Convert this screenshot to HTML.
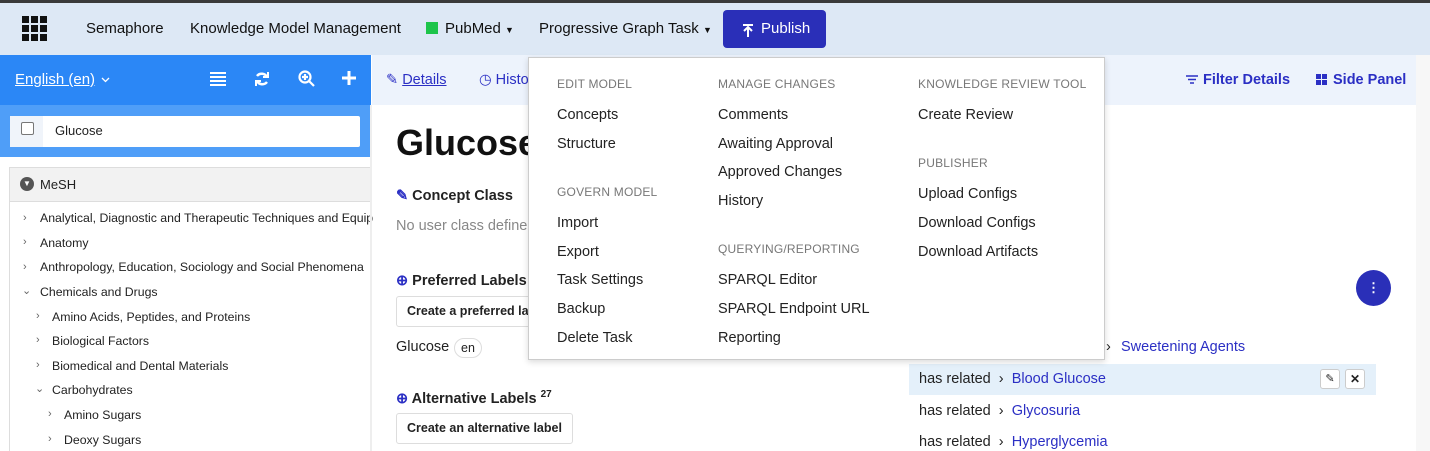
<!DOCTYPE html>
<html><head><style>
*{box-sizing:border-box;margin:0;padding:0}
body{width:1430px;height:451px;overflow:hidden;background:#fff;font-family:"Liberation Sans",Arial,sans-serif;color:#222;position:relative}
.a{position:absolute;white-space:nowrap}
.top{position:absolute;left:0;top:0;width:1430px;height:3px;background:#3a3a3a}
.nav{position:absolute;left:0;top:3px;width:1430px;height:52px;background:#dde8f5}
.nav .t{font-size:15px;color:#111;top:17px}
.lhead{position:absolute;left:0;top:55px;width:371px;height:50px;background:#2b87f6}
.lsearch{position:absolute;left:0;top:105px;width:371px;height:52px;background:#4f9ef8}
.tree{position:absolute;left:9px;top:167px;width:362px;height:284px;border-left:1px solid #ddd;border-top:1px solid #ddd;overflow:hidden}
.tree .h{height:34px;background:#f2f2f2;border-bottom:1px solid #ddd}
.ti{font-size:12.3px;color:#222;position:absolute;white-space:nowrap}
.car{font-size:11px;color:#666;position:absolute}
.tabs{position:absolute;left:372px;top:55px;width:1044px;height:50px;background:#edf3fc}
.menu{position:absolute;left:528px;top:57px;width:577px;height:303px;background:#fff;border:1px solid #ccc;box-shadow:0 2px 6px rgba(0,0,0,.15)}
.menu .s{position:absolute;font-size:12px;color:#777;letter-spacing:.2px;white-space:nowrap}
.menu .i{position:absolute;font-size:14.5px;color:#222;white-space:nowrap}
.blue{color:#2b2fc4}
.btn{position:absolute;border:1px solid #ddd;border-radius:3px;font-size:12.5px;font-weight:bold;padding:0 10px;height:31px;line-height:29px;background:#fff}
</style></head><body>
<div class="top"></div>
<div class="nav">
 <svg class="a" style="left:22px;top:13px" width="26" height="26"><g fill="#111">
 <rect x="0" y="0" width="7" height="7"/><rect x="9" y="0" width="7" height="7"/><rect x="18" y="0" width="7" height="7"/>
 <rect x="0" y="9" width="7" height="7"/><rect x="9" y="9" width="7" height="7"/><rect x="18" y="9" width="7" height="7"/>
 <rect x="0" y="18" width="7" height="7"/><rect x="9" y="18" width="7" height="7"/><rect x="18" y="18" width="7" height="7"/></g></svg>
 <div class="a t" style="left:86px">Semaphore</div>
 <div class="a t" style="left:190px">Knowledge Model Management</div>
 <div class="a" style="left:426px;top:19px;width:12px;height:12px;background:#1dc44a"></div>
 <div class="a t" style="left:445px">PubMed <span style="font-size:9px">▼</span></div>
 <div class="a t" style="left:539px">Progressive Graph Task <span style="font-size:9px">▼</span></div>
 <div class="a" style="left:723px;top:7px;width:103px;height:38px;background:#2a2fb8;border-radius:4px"></div>
 <svg class="a" style="left:742px;top:21px" width="12" height="13" fill="none" stroke="#fff" stroke-width="2"><path d="M1 1h10M6 13V4M2 7l4-4 4 4"/></svg>
 <div class="a" style="left:761px;top:17px;color:#fff;font-size:15px">Publish</div>
</div>
<div class="lhead">
 <div class="a" style="left:15px;top:16px;color:#fff;font-size:15px;text-decoration:underline">English (en)</div>
 <svg class="a" style="left:101px;top:22px" width="9" height="6" fill="none" stroke="#fff" stroke-width="1.3"><path d="M1 1l3.5 3.5L8 1"/></svg>
 <svg class="a" style="left:210px;top:17px" width="16" height="14"><g fill="#fff"><rect y="0" width="16" height="2"/><rect y="4" width="16" height="2"/><rect y="8" width="16" height="2"/><rect y="12" width="16" height="2"/></g></svg>
 <svg class="a" style="left:254px;top:16px" width="16" height="16" fill="none" stroke="#fff" stroke-width="2.5"><path d="M13 6A6 6 0 0 0 3 5M3 10a6 6 0 0 0 10 1"/><path d="M14 1v5h-5M2 15v-5h5" stroke-width="2"/></svg>
 <svg class="a" style="left:298px;top:15px" width="17" height="17" fill="none" stroke="#fff" stroke-width="2.2"><circle cx="7" cy="7" r="5.5"/><path d="M11 11l5 5M7 4v6M4 7h6"/></svg>
 <svg class="a" style="left:342px;top:16px" width="14" height="14" stroke="#fff" stroke-width="3"><path d="M7 0v14M0 7h14"/></svg>
</div>
<div class="lsearch">
 <div class="a" style="left:10px;top:11px;width:350px;height:31px;background:#fff;border-radius:2px"></div>
 <div class="a" style="left:10px;top:11px;width:33px;height:31px;background:#f0f4fa"></div>
 <div class="a" style="left:21px;top:17px;width:13px;height:13px;border:1px solid #777;border-radius:2px;background:#fff"></div>
 <div class="a" style="left:55px;top:18px;font-size:13px">Glucose</div>
</div>
<div class="tree">
 <div class="h"><div class="a" style="left:10px;top:9px;width:14px;height:14px;border-radius:50%;background:#555;color:#fff;font-size:8px;text-align:center;line-height:14px">▼</div><div class="a" style="left:30px;top:9px;font-size:13px">MeSH</div></div>
</div>
<div class="car a" style="left:23px;top:212px">›</div><div class="ti" style="left:40px;top:211px">Analytical, Diagnostic and Therapeutic Techniques and Equip</div>
<div class="car a" style="left:23px;top:236px">›</div><div class="ti" style="left:40px;top:236px">Anatomy</div>
<div class="car a" style="left:23px;top:261px">›</div><div class="ti" style="left:40px;top:260px">Anthropology, Education, Sociology and Social Phenomena</div>
<div class="car a" style="left:22px;top:284px">⌄</div><div class="ti" style="left:40px;top:285px">Chemicals and Drugs</div>
<div class="car a" style="left:36px;top:310px">›</div><div class="ti" style="left:52px;top:310px">Amino Acids, Peptides, and Proteins</div>
<div class="car a" style="left:36px;top:334px">›</div><div class="ti" style="left:52px;top:334px">Biological Factors</div>
<div class="car a" style="left:36px;top:359px">›</div><div class="ti" style="left:52px;top:359px">Biomedical and Dental Materials</div>
<div class="car a" style="left:35px;top:382px">⌄</div><div class="ti" style="left:52px;top:383px">Carbohydrates</div>
<div class="car a" style="left:48px;top:408px">›</div><div class="ti" style="left:64px;top:408px">Amino Sugars</div>
<div class="car a" style="left:48px;top:433px">›</div><div class="ti" style="left:64px;top:433px">Deoxy Sugars</div>
<div class="a" style="left:370px;top:105px;width:2px;height:346px;background:#eee"></div>
<div class="a" style="left:1416px;top:55px;width:14px;height:396px;background:#f7f7f7"></div>
<div class="tabs">
 <div class="a blue" style="left:14px;top:17px;font-size:14.5px">✎ <span style="text-decoration:underline">Details</span></div>
 <div class="a blue" style="left:107px;top:17px;font-size:14.5px">◷ Histo</div>
 <svg class="a" style="left:814px;top:20px" width="12" height="9" stroke="#2b2fc4" stroke-width="1.6"><path d="M0 1h12M2 4.5h8M4 8h4"/></svg>
 <div class="a blue" style="left:831px;top:17px;font-size:14.5px;font-weight:bold">Filter Details</div>
 <svg class="a" style="left:944px;top:19px" width="11" height="11" fill="#2b2fc4"><rect x="0" y="0" width="5" height="5"/><rect x="6" y="0" width="5" height="5"/><rect x="0" y="6" width="5" height="5"/><rect x="6" y="6" width="5" height="5"/></svg>
 <div class="a blue" style="left:961px;top:17px;font-size:14.5px;font-weight:bold">Side Panel</div>
</div>
<div class="a" style="left:396px;top:122px;font-size:36px;font-weight:bold;color:#111">Glucose</div>
<div class="a" style="left:396px;top:188px;font-size:14.5px;font-weight:bold"><span class="blue">✎</span> Concept Class</div>
<div class="a" style="left:396px;top:218px;font-size:14.5px;color:#888">No user class defined</div>
<div class="a" style="left:396px;top:273px;font-size:14.5px;font-weight:bold"><span class="blue">⊕</span> Preferred Labels</div>
<div class="btn" style="left:396px;top:296px">Create a preferred label</div>
<div class="a" style="left:396px;top:339px;font-size:14.5px">Glucose</div>
<div class="a" style="left:454px;top:338px;font-size:12.5px;border:1px solid #ddd;border-radius:11px;padding:2px 6px">en</div>
<div class="a" style="left:396px;top:389px;font-size:14.5px;font-weight:bold"><span class="blue">⊕</span> Alternative Labels <sup style="font-size:10px">27</sup></div>
<div class="btn" style="left:396px;top:413px">Create an alternative label</div>
<div class="a" style="left:1356px;top:270px;width:35px;height:36px;border-radius:50%;background:#2a2fb8;color:#fff;text-align:center;line-height:36px;font-size:13px;font-weight:bold">⋮</div>
<div class="a" style="left:1106px;top:339px;font-size:14.5px">›</div>
<div class="a blue" style="left:1121px;top:339px;font-size:14.5px">Sweetening Agents</div>
<div class="a" style="left:909px;top:364px;width:467px;height:31px;background:#e4f0fa"></div>
<div class="a" style="left:919px;top:371px;font-size:14.5px">has related &nbsp;›&nbsp; <span class="blue">Blood Glucose</span></div>
<div class="a" style="left:1320px;top:369px;width:20px;height:20px;border:1px solid #ccc;border-radius:3px;background:#fff;font-size:11px;text-align:center;line-height:18px">✎</div>
<div class="a" style="left:1345px;top:369px;width:20px;height:20px;border:1px solid #ccc;border-radius:3px;background:#fff;font-size:12px;font-weight:bold;text-align:center;line-height:18px">✕</div>
<div class="a" style="left:919px;top:403px;font-size:14.5px">has related &nbsp;›&nbsp; <span class="blue">Glycosuria</span></div>
<div class="a" style="left:919px;top:434px;font-size:14.5px">has related &nbsp;›&nbsp; <span class="blue">Hyperglycemia</span></div>
<div class="menu">
 <div class="s" style="left:28px;top:19px">EDIT MODEL</div>
 <div class="i" style="left:28px;top:49px">Concepts</div>
 <div class="i" style="left:28px;top:78px">Structure</div>
 <div class="s" style="left:28px;top:127px">GOVERN MODEL</div>
 <div class="i" style="left:28px;top:157px">Import</div>
 <div class="i" style="left:28px;top:186px">Export</div>
 <div class="i" style="left:28px;top:214px">Task Settings</div>
 <div class="i" style="left:28px;top:243px">Backup</div>
 <div class="i" style="left:28px;top:272px">Delete Task</div>
 <div class="s" style="left:189px;top:19px">MANAGE CHANGES</div>
 <div class="i" style="left:189px;top:49px">Comments</div>
 <div class="i" style="left:189px;top:78px">Awaiting Approval</div>
 <div class="i" style="left:189px;top:106px">Approved Changes</div>
 <div class="i" style="left:189px;top:135px">History</div>
 <div class="s" style="left:189px;top:184px">QUERYING/REPORTING</div>
 <div class="i" style="left:189px;top:214px">SPARQL Editor</div>
 <div class="i" style="left:189px;top:243px">SPARQL Endpoint URL</div>
 <div class="i" style="left:189px;top:272px">Reporting</div>
 <div class="s" style="left:389px;top:19px">KNOWLEDGE REVIEW TOOL</div>
 <div class="i" style="left:389px;top:49px">Create Review</div>
 <div class="s" style="left:389px;top:98px">PUBLISHER</div>
 <div class="i" style="left:389px;top:128px">Upload Configs</div>
 <div class="i" style="left:389px;top:157px">Download Configs</div>
 <div class="i" style="left:389px;top:186px">Download Artifacts</div>
</div>
</body></html>
